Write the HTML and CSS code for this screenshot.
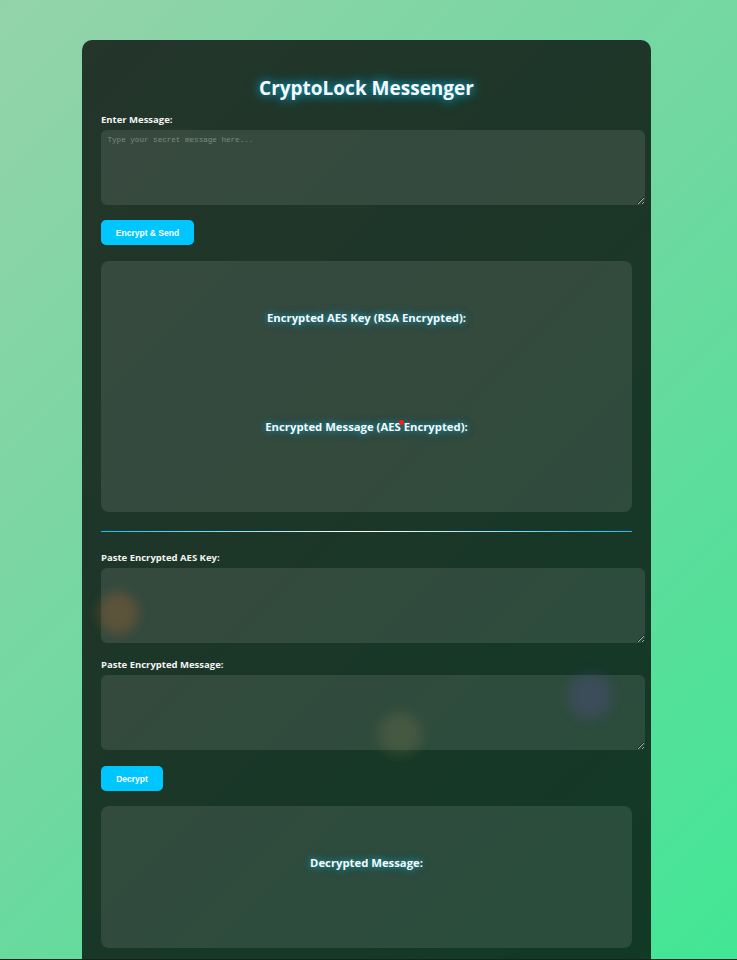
FILE: index.html
```html
<!DOCTYPE html>
<html lang="en">
<head>
<meta charset="utf-8">
<title>CryptoLock Messenger</title>
<link rel="stylesheet" href="styles.css">
</head>
<body>
<div class="particle p-orange"></div>
<div class="particle p-yellow"></div>
<div class="particle p-purple"></div>
<div class="dot-red"></div>
<main class="card">
  <h1 class="title">CryptoLock Messenger</h1>

  <label class="label" for="msg">Enter Message:</label>
  <textarea id="msg" class="field" placeholder="Type your secret message here..."></textarea>
  <button class="btn btn-encrypt">Encrypt &amp; Send</button>

  <section class="output-box">
    <div class="out-section">
      <h3 class="out-title">Encrypted AES Key (RSA Encrypted):</h3>
      <div class="out-value"></div>
    </div>
    <div class="out-section">
      <h3 class="out-title">Encrypted Message (AES Encrypted):</h3>
      <div class="out-value"></div>
    </div>
  </section>

  <hr class="divider">

  <label class="label" for="key">Paste Encrypted AES Key:</label>
  <textarea id="key" class="field"></textarea>
  <label class="label label-next" for="enc">Paste Encrypted Message:</label>
  <textarea id="enc" class="field"></textarea>
  <button class="btn btn-decrypt">Decrypt</button>

  <section class="output-box output-last">
    <div class="out-section">
      <h3 class="out-title">Decrypted Message:</h3>
      <div class="out-value"></div>
    </div>
  </section>
</main>
</body>
</html>
```

FILE: styles.css
```css
html {
  background: #13251c;
}
body {
  margin: 0;
  height: 959px;
  overflow: hidden;
  background: linear-gradient(135deg, #94d3a9 0%, #6fd8a0 50%, #42e695 100%);
  font-family: "Open Sans", "Noto Sans", sans-serif;
  position: relative;
}
.card {
  width: 531px;
  margin: 40px 0 0 82px;
  padding: 36px 19px 20px;
  background: rgba(0, 0, 0, 0.75);
  border-radius: 10px;
}
.title {
  margin: 0 0 14px;
  font-size: 19px;
  line-height: 24px;
  font-weight: 700;
  color: #f6fafb;
  text-align: center;
  text-shadow: 0 0 8px rgba(0, 198, 255, 0.75), 0 0 16px rgba(0, 198, 255, 0.45);
}
.label {
  display: block;
  font-size: 9.5px;
  line-height: 12px;
  font-weight: 700;
  color: #f4f4f4;
  margin-bottom: 4px;
}
.label-next {
  margin-top: 16px;
}
.field {
  display: block;
  width: 100%;
  box-sizing: content-box;
  height: 63px;
  padding: 6px 6.5px;
  border: 0;
  border-radius: 6px;
  background: rgba(255, 255, 255, 0.1);
  color: #fff;
  font-family: "Liberation Mono", monospace;
  font-size: 7.6px;
  outline: none;
}
.field::placeholder {
  color: #7c8a82;
}
.btn {
  display: block;
  margin-top: 15px;
  height: 25px;
  padding: 0;
  white-space: nowrap;
  border: 0;
  border-radius: 5px;
  background: #00c6ff;
  color: #fff;
  font-family: "Liberation Sans", Arial, sans-serif;
  font-weight: 700;
  font-size: 8.5px;
}
.btn-encrypt { width: 93px; }
.btn-decrypt { width: 62px; margin-top: 16px; }
.output-box {
  margin-top: 16px;
  padding: 17px 0;
  border-radius: 8px;
  background: rgba(255, 255, 255, 0.1);
}
.output-last {
  margin-top: 15px;
  padding-bottom: 16px;
}
.out-title {
  margin: 32px 0 0;
  font-size: 11.3px;
  line-height: 16px;
  font-weight: 700;
  color: #f6fafa;
  text-align: center;
  text-shadow: 0 0 6px rgba(0, 198, 255, 0.6), 0 0 12px rgba(0, 198, 255, 0.35);
}
.out-value {
  height: 60.5px;
}
.divider {
  margin: 19px 0 20px;
  height: 1px;
  border: 0;
  background: linear-gradient(90deg, #00c6ff, #ffffff 50%, #00c6ff);
}
.particle {
  position: absolute;
  border-radius: 50%;
  filter: blur(6px);
  z-index: 2;
  pointer-events: none;
}
.p-orange {
  left: 98px; top: 592px; width: 40px; height: 42px;
  background: rgba(255, 120, 50, 0.2);
}
.p-yellow {
  left: 378px; top: 712px; width: 44px; height: 44px;
  background: rgba(230, 180, 90, 0.12);
}
.p-purple {
  left: 568px; top: 673px; width: 44px; height: 46px;
  background: rgba(150, 80, 255, 0.15);
}
.dot-red {
  position: absolute;
  left: 399px; top: 420px; width: 5px; height: 5px;
  border-radius: 50%;
  background: #ff1a1a;
  z-index: 3;
}
```
